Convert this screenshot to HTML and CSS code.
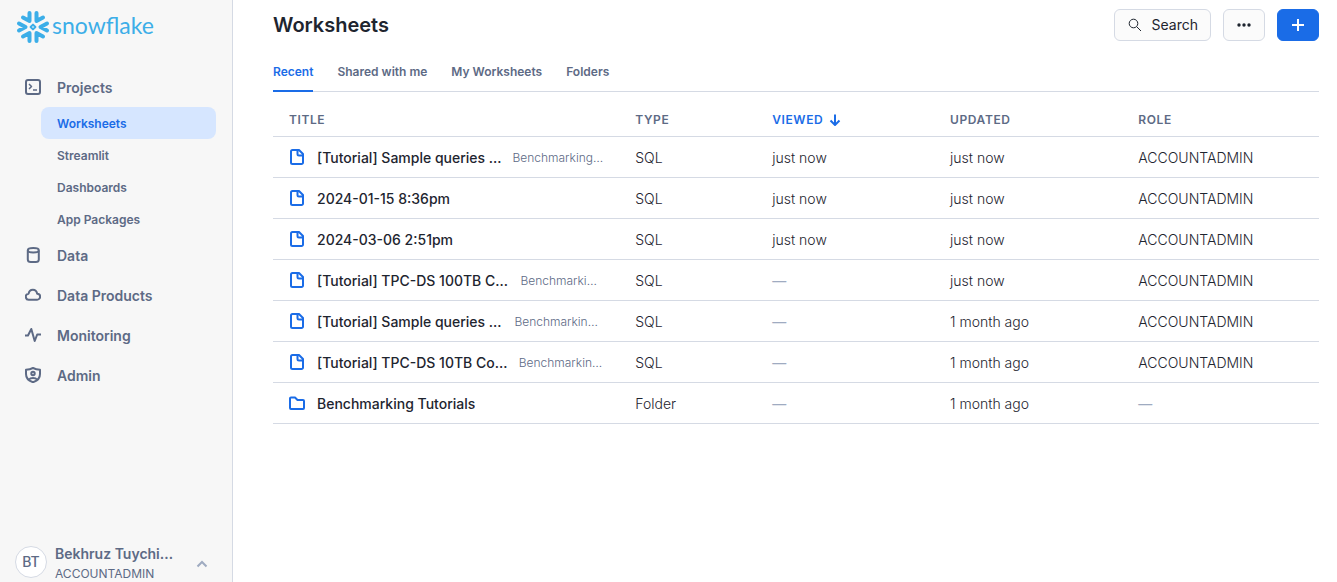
FILE: index.html
```html
<!DOCTYPE html>
<html lang="en">
<head>
    <meta charset="UTF-8">
    <meta name="viewport" content="width=device-width, initial-scale=1.0">
    <title>Worksheets</title>
    <link rel="stylesheet" href="styles.css">
</head>
<body>
    <!-- Shared row icons -->
    <svg class="sprite" aria-hidden="true">
        <symbol id="icon-file" viewBox="0 0 16 16">
            <path d="M10 1H3.500A1.500 1.500 0 0 0 2 2.500v11A1.500 1.500 0 0 0 3.500 15h9a1.500 1.500 0 0 0 1.500-1.500V5zM8.500 1v4a1.500 1.500 0 0 0 1.500 1.500h4"/>
        </symbol>
        <symbol id="icon-folder" viewBox="0 0 16 16">
            <path d="M1 3.500a1 1 0 0 1 1-1h4l2.500 2.500H14a1 1 0 0 1 1 1v7a1 1 0 0 1-1 1H2a1 1 0 0 1-1-1z"/>
        </symbol>
    </svg>

    <aside class="sidebar">
        <a class="logo" href="#">
            <svg class="logo-mark" viewBox="0 0 34 34" aria-hidden="true">
                <path d="M3 13.500 9.500 17 3 20.500M31 13.500 24.500 17l6.500 3.500M13.500 3v8L7 7.500M20.500 3v8L27 7.500M13.500 31v-8L7 26.500M20.500 31v-8l6.500 3.500"/>
                <path class="logo-core" d="M17 14.600 19.400 17 17 19.400 14.600 17z"/>
            </svg>
            <span class="logo-text">snowflake</span>
        </a>

        <nav class="menu">
            <a class="menu-item" href="#">
                <svg class="icon" viewBox="0 0 16 16"><rect x="1" y="1" width="14" height="14" rx="2"/><path class="thin" d="M4 5l2.500 2.500L4 10M8 11h4"/></svg>
                Projects
            </a>
            <a class="submenu-item active" href="#">Worksheets</a>
            <a class="submenu-item" href="#">Streamlit</a>
            <a class="submenu-item" href="#">Dashboards</a>
            <a class="submenu-item" href="#">App Packages</a>
            <a class="menu-item" href="#">
                <svg class="icon" viewBox="0 0 16 16"><path d="M2.800 3.500v9c0 1.400 1.200 2.500 3 2.500h5c1.800 0 3-1.100 3-2.500v-9"/><ellipse cx="8.300" cy="3.200" rx="5.500" ry="2.200"/></svg>
                Data
            </a>
            <a class="menu-item" href="#">
                <svg class="icon" viewBox="0 0 16 16"><path d="M4 12.700a3 3 0 0 1-.4-6C4 4.200 5.600 2.700 7.900 2.700c2.200 0 3.800 1.500 4.300 4a3 3 0 0 1-.2 6z"/></svg>
                Data Products
            </a>
            <a class="menu-item" href="#">
                <svg class="icon" viewBox="0 0 16 16"><path d="M0 8.500h3L6.300 2l3.400 12 2.500-6.500H16"/></svg>
                Monitoring
            </a>
            <a class="menu-item" href="#">
                <svg class="icon" viewBox="0 0 16 16"><path d="M8 1C6 2 4 2.600 1 2.800V7c0 4 3 7 7 8.200 4-1.200 7-4.200 7-8.200V2.800C12 2.600 10 2 8 1z"/><circle cx="8" cy="6.500" r="1.700"/><path d="M4 12.500c1.500-2 6.500-2 8 0"/></svg>
                Admin
            </a>
        </nav>

        <button class="account" type="button">
            <span class="avatar">BT</span>
            <span class="account-info">
                <span class="account-name">Bekhruz Tuychiev</span>
                <span class="account-role">ACCOUNTADMIN</span>
            </span>
            <svg class="caret" viewBox="0 0 12 12" aria-hidden="true"><path d="M1.500 8.500 6 4l4.500 4.500"/></svg>
        </button>
    </aside>

    <main class="content">
        <header class="page-header">
            <h1>Worksheets</h1>
            <div class="actions">
                <button class="btn btn-search" type="button">
                    <svg viewBox="0 0 14 14" aria-hidden="true"><circle cx="5.500" cy="5.500" r="4.300"/><path d="m8.700 8.700 4.300 4.300"/></svg>
                    Search
                </button>
                <button class="btn btn-more" type="button" aria-label="More">
                    <svg viewBox="0 0 14 14" aria-hidden="true"><circle cx="2" cy="7" r="1.700"/><circle cx="7" cy="7" r="1.700"/><circle cx="12" cy="7" r="1.700"/></svg>
                </button>
                <button class="btn btn-add" type="button" aria-label="Add">
                    <svg viewBox="0 0 14 14" aria-hidden="true"><path d="M7 1v12M1 7h12"/></svg>
                </button>
            </div>
        </header>

        <nav class="tabs">
            <a class="tab active" href="#">Recent</a>
            <a class="tab" href="#">Shared with me</a>
            <a class="tab" href="#">My Worksheets</a>
            <a class="tab" href="#">Folders</a>
        </nav>

        <table class="worksheets">
            <thead>
                <tr>
                    <th class="col-title">Title</th>
                    <th class="col-type">Type</th>
                    <th class="col-viewed sorted">Viewed <svg class="sort" viewBox="0 0 12 12" aria-hidden="true"><path d="M6 .5v10M1.500 6.500 6 11l4.500-4.500"/></svg></th>
                    <th class="col-updated">Updated</th>
                    <th class="col-role">Role</th>
                </tr>
            </thead>
            <tbody>
                <tr>
                    <td><div class="title"><svg class="row-icon"><use href="#icon-file"/></svg><span class="name">[Tutorial] Sample queries on TPC-H data</span><span class="folder">Benchmarking Tutorials</span></div></td>
                    <td>SQL</td>
                    <td>just now</td>
                    <td>just now</td>
                    <td>ACCOUNTADMIN</td>
                </tr>
                <tr>
                    <td><div class="title"><svg class="row-icon"><use href="#icon-file"/></svg><span class="name">2024-01-15 8:36pm</span></div></td>
                    <td>SQL</td>
                    <td>just now</td>
                    <td>just now</td>
                    <td>ACCOUNTADMIN</td>
                </tr>
                <tr>
                    <td><div class="title"><svg class="row-icon"><use href="#icon-file"/></svg><span class="name">2024-03-06 2:51pm</span></div></td>
                    <td>SQL</td>
                    <td>just now</td>
                    <td>just now</td>
                    <td>ACCOUNTADMIN</td>
                </tr>
                <tr>
                    <td><div class="title"><svg class="row-icon"><use href="#icon-file"/></svg><span class="name">[Tutorial] TPC-DS 100TB Complete Query Test</span><span class="folder">Benchmarking Tutorials</span></div></td>
                    <td>SQL</td>
                    <td class="empty">—</td>
                    <td>just now</td>
                    <td>ACCOUNTADMIN</td>
                </tr>
                <tr>
                    <td><div class="title"><svg class="row-icon"><use href="#icon-file"/></svg><span class="name">[Tutorial] Sample queries on TPC-DS data</span><span class="folder">Benchmarking Tutorials</span></div></td>
                    <td>SQL</td>
                    <td class="empty">—</td>
                    <td>1 month ago</td>
                    <td>ACCOUNTADMIN</td>
                </tr>
                <tr>
                    <td><div class="title"><svg class="row-icon"><use href="#icon-file"/></svg><span class="name">[Tutorial] TPC-DS 10TB Complete Query Test</span><span class="folder">Benchmarking Tutorials</span></div></td>
                    <td>SQL</td>
                    <td class="empty">—</td>
                    <td>1 month ago</td>
                    <td>ACCOUNTADMIN</td>
                </tr>
                <tr>
                    <td><div class="title"><svg class="row-icon"><use href="#icon-folder"/></svg><span class="name">Benchmarking Tutorials</span></div></td>
                    <td>Folder</td>
                    <td class="empty">—</td>
                    <td>1 month ago</td>
                    <td class="empty">—</td>
                </tr>
            </tbody>
        </table>
    </main>
</body>
</html>
```

FILE: styles.css
```css
* {
    box-sizing: border-box;
}
body {
    margin: 0;
    display: flex;
    height: 100vh;
    overflow: hidden;
    font-family: Inter, "Liberation Sans", sans-serif;
    font-size: 14px;
    line-height: 20px;
    color: #1e252f;
    background-color: #fff;
}
a {
    color: inherit;
    text-decoration: none;
}
button {
    font: inherit;
    color: inherit;
    cursor: pointer;
}
svg {
    fill: none;
    stroke: currentColor;
    flex-shrink: 0;
}
.sprite {
    display: none;
}

/* Sidebar */
.sidebar {
    display: flex;
    flex-direction: column;
    flex: 0 0 233px;
    padding: 10px 16px 0;
    background-color: #f7f7f7;
    border-right: 1px solid #d5dae4;
    color: #5d6a85;
}
.logo {
    display: flex;
    align-items: center;
    gap: 2px;
    height: 34px;
    color: #3caee8;
}
.logo-mark {
    width: 34px;
    height: 34px;
    stroke-width: 4;
    stroke-linecap: round;
    stroke-linejoin: round;
}
.logo-core {
    stroke-width: 2;
}
.logo-text {
    padding-bottom: 4px;
    font-family: Lato, sans-serif;
    font-size: 23px;
    line-height: 28px;
}
.menu {
    display: flex;
    flex-direction: column;
    flex: 1;
    padding-top: 24px;
    font-weight: 600;
}
.menu-item {
    display: flex;
    align-items: center;
    gap: 16px;
    height: 40px;
    padding-left: 9px;
}
.menu-item:first-child {
    height: 39px;
}
.icon {
    width: 16px;
    height: 16px;
    margin-bottom: 2px;
    stroke-width: 2;
    stroke-linejoin: round;
}
.thin {
    stroke-width: 1.5;
}
.submenu-item {
    height: 32px;
    margin-left: 25px;
    padding: 1px 16px 0;
    border-radius: 8px;
    font-size: 12px;
    line-height: 32px;
}
.submenu-item.active {
    background-color: #d6e6ff;
    color: #1a6ce7;
}
.submenu-item + .menu-item {
    margin-top: 1px;
}
.account {
    display: flex;
    align-items: center;
    gap: 8px;
    height: 40px;
    margin-left: -1px;
    padding: 0 8px 0 0;
    border: 0;
    background: none;
    text-align: left;
}
.avatar {
    flex-shrink: 0;
    width: 32px;
    height: 32px;
    border: 1px solid #d5dae4;
    border-radius: 50%;
    background-color: #fff;
    font-weight: 500;
    line-height: 30px;
    text-align: center;
}
.account-info {
    display: flex;
    flex-direction: column;
    flex: 1;
    min-width: 0;
    padding-top: 4px;
}
.account-name {
    width: 120px;
    overflow: hidden;
    text-overflow: ellipsis;
    white-space: nowrap;
    font-weight: 600;
}
.account-role {
    font-size: 12px;
}
.caret {
    width: 12px;
    height: 12px;
    margin-top: 4px;
    stroke: #9fabc1;
    stroke-width: 2;
}

/* Page header */
.content {
    flex: 1;
    min-width: 0;
    padding: 9px 18px 0 40px;
}
.page-header {
    display: flex;
    align-items: center;
    justify-content: space-between;
    height: 32px;
}
h1 {
    margin: 0;
    font-size: 20px;
    font-weight: 600;
    line-height: 24px;
}
.actions {
    display: flex;
    gap: 12px;
}
.btn {
    display: flex;
    align-items: center;
    justify-content: center;
    width: 42px;
    height: 32px;
    padding: 0;
    border: 1px solid #d5dae4;
    border-radius: 6px;
    background-color: #fbfbfb;
}
.btn svg {
    width: 14px;
    height: 14px;
}
.btn-search {
    gap: 10px;
    width: auto;
    padding: 0 12px 0 13px;
}
.btn-more svg {
    fill: currentColor;
    stroke: none;
}
.btn-add {
    border-color: #1a6ce7;
    background-color: #1a6ce7;
    color: #fff;
}
.btn-add svg {
    stroke-width: 2;
}

/* Tabs */
.tabs {
    display: flex;
    gap: 24px;
    margin-top: 11px;
    border-bottom: 1px solid #d5dae4;
    color: #5d6a85;
    font-size: 12px;
    font-weight: 600;
}
.tab {
    height: 40px;
    margin-bottom: -1px;
    line-height: 40px;
}
.tab.active {
    border-bottom: 2px solid #1a6ce7;
    color: #1a6ce7;
}

/* Worksheets table */
.worksheets {
    width: 100%;
    table-layout: fixed;
    border-collapse: collapse;
}
.worksheets th,
.worksheets td {
    height: 41px;
    padding: 2px 16px 0;
    border-bottom: 1px solid #d5dae4;
    text-align: left;
    font-weight: 400;
    white-space: nowrap;
}
.worksheets td {
    font-weight: 300;
}
.worksheets th {
    height: 44px;
    padding-top: 12px;
    color: #5d6a85;
    font-size: 12px;
    font-weight: 600;
    letter-spacing: 0.05em;
    text-transform: uppercase;
}
.worksheets th.sorted {
    color: #1a6ce7;
}
.col-title {
    width: 33.1%;
}
.col-type {
    width: 13.1%;
}
.col-viewed {
    width: 17%;
}
.col-updated {
    width: 18%;
}
.sort {
    width: 12px;
    height: 12px;
    margin-left: 2px;
    stroke-width: 2;
    vertical-align: -2px;
}
.title {
    display: flex;
    align-items: center;
}
.row-icon {
    width: 16px;
    height: 16px;
    margin: 0 12px 2px 0;
    color: #1a6ce7;
    stroke-width: 2;
    stroke-linejoin: round;
}
.name,
.folder {
    overflow: hidden;
    text-overflow: ellipsis;
}
.name {
    font-weight: 500;
}
.folder {
    margin-left: 8px;
    color: #5d6a85;
    font-size: 12px;
}
.worksheets .empty {
    color: #9fabc1;
    font-weight: 500;
}
```
